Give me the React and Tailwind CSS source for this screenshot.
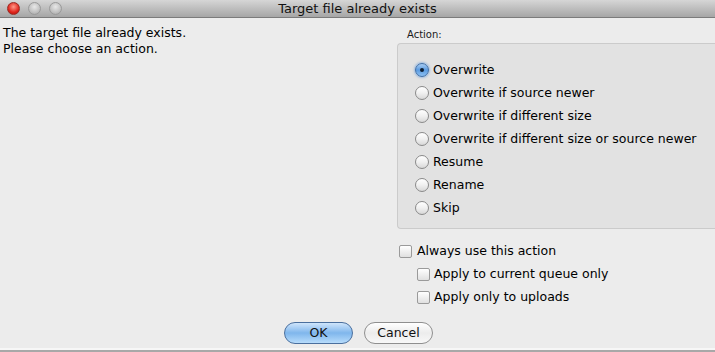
import React, { useState } from 'react';

const options = [
  'Overwrite',
  'Overwrite if source newer',
  'Overwrite if different size',
  'Overwrite if different size or source newer',
  'Resume',
  'Rename',
  'Skip',
];

function Radio({ checked }) {
  return (
    <span
      className={`w-[14px] h-[14px] rounded-full flex items-center justify-center shrink-0 border ${
        checked
          ? 'border-[#3f6fa8] bg-gradient-to-b from-[#a9cdf2] via-[#5b9be0] to-[#8cc0f2] shadow-[0_0_2px_1px_rgba(90,150,220,0.5)]'
          : 'border-[#8a8a8a] bg-gradient-to-b from-[#ffffff] via-[#f0f0f0] to-[#d8d8d8]'
      }`}
    >
      {checked && <span className="w-[4px] h-[4px] rounded-full bg-[#0d1f33]" />}
    </span>
  );
}

function Check() {
  return (
    <span className="w-[13px] h-[13px] rounded-[2px] border border-[#9a9a9a] bg-gradient-to-b from-[#ffffff] to-[#e0e0e0] shrink-0" />
  );
}

export default function App() {
  const [action, setAction] = useState(0);

  return (
    <div className="w-[715px] h-[352px] bg-[#ececec] flex flex-col overflow-hidden text-[#000] font-['DejaVu_Sans',sans-serif]">
      {/* title bar */}
      <div className="h-[18px] shrink-0 relative flex items-center justify-center bg-gradient-to-b from-[#d6d6d6] to-[#a6a6a6] border-b border-[#7b7b7b]">
        <div className="absolute left-[7px] top-[2px] flex gap-[8px]">
          <span className="w-[13px] h-[13px] rounded-full bg-[radial-gradient(circle_at_50%_35%,#ff9a8a,#e0251c_60%,#a8100c)] border border-[#9a2b24]" />
          <span className="w-[13px] h-[13px] rounded-full bg-[radial-gradient(circle_at_50%_35%,#e8e8e8,#bdbdbd_65%,#a0a0a0)] border border-[#9a9a9a]" />
          <span className="w-[13px] h-[13px] rounded-full bg-[radial-gradient(circle_at_50%_35%,#e8e8e8,#bdbdbd_65%,#a0a0a0)] border border-[#9a9a9a]" />
        </div>
        <span className="text-[13px] leading-none text-[#111]">Target file already exists</span>
      </div>

      <div className="flex-1 flex">
        {/* message */}
        <div className="flex-1 pl-[3px] pt-[7px] text-[12.5px] leading-[16px]">
          <p>The target file already exists.</p>
          <p>Please choose an action.</p>
        </div>

        {/* right column */}
        <div className="w-[318px] flex flex-col pt-[11px]">
          <div className="pl-[10px] text-[10px] leading-[12px] text-[#1a1a1a]">Action:</div>
          <div className="mt-[2px] h-[186px] bg-[#e2e2e2] border border-[#cbcbcb] rounded-l-[4px] border-r-0 pt-[19px] pl-[17px] flex flex-col gap-[9px]">
            {options.map((o, i) => (
              <label
                key={o}
                onClick={() => setAction(i)}
                className="flex items-center gap-[4px] h-[14px] text-[12.5px] leading-none cursor-default"
              >
                <Radio checked={action === i} />
                <span>{o}</span>
              </label>
            ))}
          </div>

          <div className="mt-[16px] flex flex-col gap-[10px] text-[12.5px] leading-none">
            <label className="flex items-center gap-[5px] pl-[2px] h-[13px]">
              <Check />
              <span>Always use this action</span>
            </label>
            <label className="flex items-center gap-[4px] pl-[20px] h-[13px]">
              <Check />
              <span>Apply to current queue only</span>
            </label>
            <label className="flex items-center gap-[4px] pl-[20px] h-[13px]">
              <Check />
              <span>Apply only to uploads</span>
            </label>
          </div>
        </div>
      </div>

      {/* buttons */}
      <div className="h-[34px] shrink-0 flex justify-center items-start pt-[8px] gap-[11px] pl-[2px]">
        <button className="w-[69px] h-[22px] rounded-full border border-[#4a6f9e] bg-gradient-to-b from-[#cfe5fb] via-[#7fb6ec] to-[#b7dcfb] text-[12.5px] leading-none text-[#111]">
          OK
        </button>
        <button className="w-[69px] h-[22px] rounded-full border border-[#8f8f8f] bg-gradient-to-b from-[#ffffff] via-[#ececec] to-[#f8f8f8] text-[12.5px] leading-none text-[#111]">
          Cancel
        </button>
      </div>
      <div className="h-[2px] shrink-0 bg-[#f7f7f7]" />
      <div className="h-[2px] shrink-0 bg-[#a8a8a8]" />
    </div>
  );
}
